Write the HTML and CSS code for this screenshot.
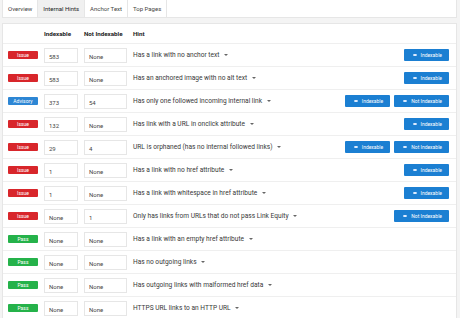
FILE: index.html
```html
<!DOCTYPE html>
<html lang="en">
  <head>
    <meta charset="UTF-8" />
    <meta name="viewport" content="width=device-width, initial-scale=1.0" />
    <title>Internal Hints</title>
    <link rel="stylesheet" href="styles.css">
  </head>
  <body>
    <div class="page">
      <!-- Tabs -->
      <div class="tabs">
        <div class="tab">Overview</div>
        <div class="tab active">Internal Hints</div>
        <div class="tab">Anchor Text</div>
        <div class="tab">Top Pages</div>
      </div>

      <!-- Hints table -->
      <div class="panel">
        <div class="row head">
          <span></span>
          <span>Indexable</span>
          <span>Not Indexable</span>
          <span>Hint</span>
          <span></span>
        </div>

        <div class="row">
          <span class="badge issue">Issue</span>
          <span class="box">583</span>
          <span class="box">None</span>
          <span class="hint">Has a link with no anchor text <i class="caret"></i></span>
          <div class="actions"><button class="btn"><i class="eye"></i>Indexable</button></div>
        </div>

        <div class="row">
          <span class="badge issue">Issue</span>
          <span class="box">583</span>
          <span class="box">None</span>
          <span class="hint">Has an anchored image with no alt text <i class="caret"></i></span>
          <div class="actions"><button class="btn"><i class="eye"></i>Indexable</button></div>
        </div>

        <div class="row">
          <span class="badge advisory">Advisory</span>
          <span class="box">373</span>
          <span class="box">54</span>
          <span class="hint">Has only one followed incoming internal link <i class="caret"></i></span>
          <div class="actions">
            <button class="btn"><i class="eye"></i>Indexable</button>
            <button class="btn"><i class="eye"></i>Not Indexable</button>
          </div>
        </div>

        <div class="row">
          <span class="badge issue">Issue</span>
          <span class="box">132</span>
          <span class="box">None</span>
          <span class="hint">Has link with a URL in onclick attribute <i class="caret"></i></span>
          <div class="actions"><button class="btn"><i class="eye"></i>Indexable</button></div>
        </div>

        <div class="row">
          <span class="badge issue">Issue</span>
          <span class="box">29</span>
          <span class="box">4</span>
          <span class="hint">URL is orphaned (has no internal followed links) <i class="caret"></i></span>
          <div class="actions">
            <button class="btn"><i class="eye"></i>Indexable</button>
            <button class="btn"><i class="eye"></i>Not Indexable</button>
          </div>
        </div>

        <div class="row">
          <span class="badge issue">Issue</span>
          <span class="box">1</span>
          <span class="box">None</span>
          <span class="hint">Has a link with no href attribute <i class="caret"></i></span>
          <div class="actions"><button class="btn"><i class="eye"></i>Indexable</button></div>
        </div>

        <div class="row">
          <span class="badge issue">Issue</span>
          <span class="box">1</span>
          <span class="box">None</span>
          <span class="hint">Has a link with whitespace in href attribute <i class="caret"></i></span>
          <div class="actions"><button class="btn"><i class="eye"></i>Indexable</button></div>
        </div>

        <div class="row">
          <span class="badge issue">Issue</span>
          <span class="box">None</span>
          <span class="box">1</span>
          <span class="hint">Only has links from URLs that do not pass Link Equity <i class="caret"></i></span>
          <div class="actions"><button class="btn"><i class="eye"></i>Not Indexable</button></div>
        </div>

        <div class="row">
          <span class="badge pass">Pass</span>
          <span class="box">None</span>
          <span class="box">None</span>
          <span class="hint">Has a link with an empty href attribute <i class="caret"></i></span>
          <div class="actions"></div>
        </div>

        <div class="row">
          <span class="badge pass">Pass</span>
          <span class="box">None</span>
          <span class="box">None</span>
          <span class="hint">Has no outgoing links <i class="caret"></i></span>
          <div class="actions"></div>
        </div>

        <div class="row">
          <span class="badge pass">Pass</span>
          <span class="box">None</span>
          <span class="box">None</span>
          <span class="hint">Has outgoing links with malformed href data <i class="caret"></i></span>
          <div class="actions"></div>
        </div>

        <div class="row">
          <span class="badge pass">Pass</span>
          <span class="box">None</span>
          <span class="box">None</span>
          <span class="hint">HTTPS URL links to an HTTP URL <i class="caret"></i></span>
          <div class="actions"></div>
        </div>
      </div>
    </div>
  </body>
</html>
```

FILE: styles.css
```css
body {
  margin: 0;
  padding: 0;
  background-color: #f4f4f4;
  font-family: Roboto, "Liberation Sans", sans-serif;
  color: #333;
  overflow: hidden;
}

.page {
  padding: 0 3px 0 2px;
}

/* Tabs */
.tabs {
  display: flex;
  height: 17px;
  background-color: #fff;
  border: 1px solid #e6e6e6;
  border-top: none;
}

.tab {
  display: flex;
  align-items: center;
  padding: 0 5px;
  font-size: 6px;
  color: #444;
  border-right: 1px solid #e6e6e6;
}

.tab.active {
  background-color: #f0f0f0;
  color: #222;
}

/* Table */
.panel {
  margin-top: 5px;
  background-color: #fff;
  border: 1px solid #e6e6e6;
}

.row {
  display: grid;
  grid-template-columns: 30px 34px 43px 1fr auto;
  column-gap: 6px;
  align-items: center;
  height: 23px;
  padding: 0 7px 0 5px;
  border-top: 1px solid #efefef;
  box-sizing: border-box;
}

.row.head {
  height: 19px;
  border-top: none;
  font-size: 6.2px;
  font-weight: bold;
  color: #222;
}

.badge {
  height: 8px;
  line-height: 8px;
  text-align: center;
  font-size: 5px;
  color: #fff;
  border-radius: 1px;
}

.issue {
  background-color: #d8262b;
}

.advisory {
  background-color: #2d86d4;
}

.pass {
  background-color: #25b24a;
}

.box {
  height: 15px;
  line-height: 15px;
  padding-left: 4px;
  border: 1px solid #e6e6e6;
  box-sizing: border-box;
  font-size: 6px;
  color: #444;
}

.hint {
  font-size: 6.6px;
  color: #383838;
  white-space: nowrap;
}

.caret {
  display: inline-block;
  margin-left: 3px;
  vertical-align: middle;
  border-left: 2px solid transparent;
  border-right: 2px solid transparent;
  border-top: 2px solid #666;
}

.actions {
  display: flex;
  justify-content: flex-end;
  gap: 4px;
}

.btn {
  display: flex;
  align-items: center;
  gap: 4px;
  height: 12px;
  padding: 0 7px 0 9px;
  background-color: #1b7fd2;
  color: #fff;
  border: none;
  border-radius: 1px;
  font-family: Roboto, "Liberation Sans", sans-serif;
  font-size: 5px;
}

.eye {
  display: inline-block;
  width: 4px;
  height: 2.5px;
  border-radius: 50%;
  background-color: #e3efff;
}
```
